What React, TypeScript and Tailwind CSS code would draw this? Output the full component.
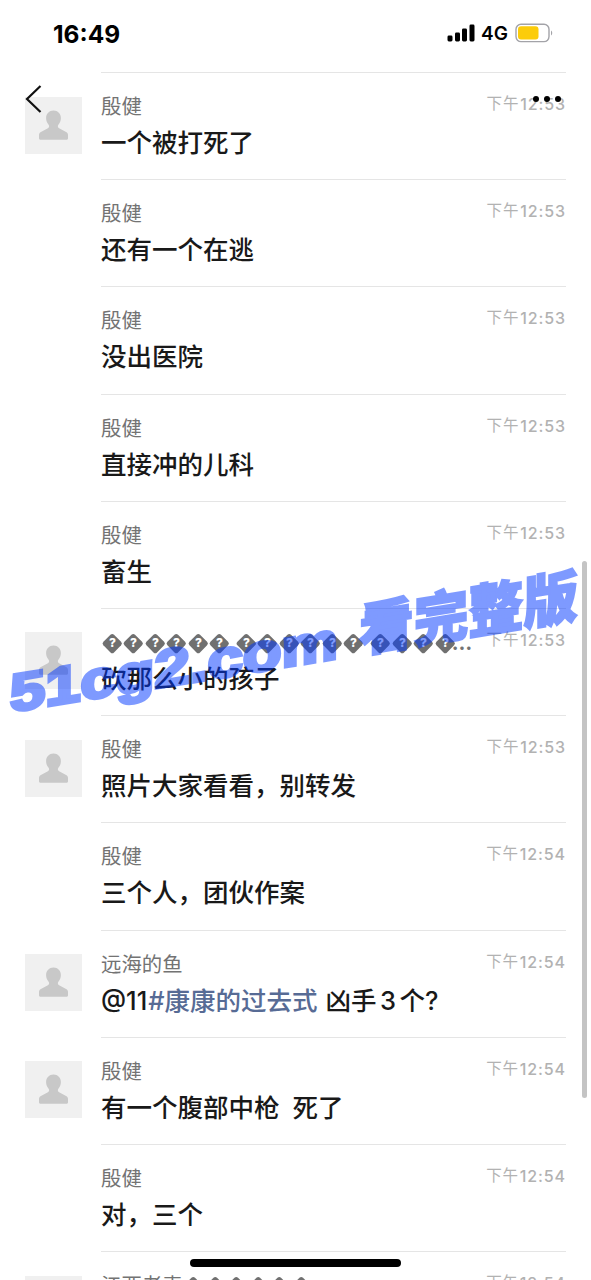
import React from 'react';

interface Message {
  name: string;
  time: string;
  text: React.ReactNode;
  avatar?: boolean;
}

// "?" in a name stands for a character that can't be displayed
const messages: Message[] = [
  { name: '殷健', time: '12:53', text: '一个被打死了', avatar: true },
  { name: '殷健', time: '12:53', text: '还有一个在逃' },
  { name: '殷健', time: '12:53', text: '没出医院' },
  { name: '殷健', time: '12:53', text: '直接冲的儿科' },
  { name: '殷健', time: '12:53', text: '畜生' },
  { name: '?????? ?????? ????…', time: '12:53', text: '砍那么小的孩子', avatar: true },
  { name: '殷健', time: '12:53', text: '照片大家看看，别转发', avatar: true },
  { name: '殷健', time: '12:54', text: '三个人，团伙作案' },
  {
    name: '远海的鱼',
    time: '12:54',
    text: (
      <>
        @11<span className="ml-px text-[#576b95]">#康康的过去式</span>
        <span className="ml-[8px]">凶手</span>
        <span className="mx-[3.5px]">3</span>个?
      </>
    ),
    avatar: true,
  },
  { name: '殷健', time: '12:54', text: <>有一个腹部中枪<span className="ml-[13px]">死了</span></>, avatar: true },
  { name: '殷健', time: '12:54', text: '对，三个' },
  { name: '江西老表??????', time: '12:54', text: '', avatar: true },
];

const StatusBar = () => (
  <div className="flex h-[72px] shrink-0 items-start justify-between pl-[53px] pr-[38px]">
    <span className="mt-[17.5px] font-['Inter'] text-[24.5px] leading-8 font-bold text-black">16:49</span>
    <div className="mt-[17px] flex h-8 items-center">
      <svg className="h-[18px] w-[28px]" viewBox="0 0 28 18">
        <rect x="0.5" y="11.5" width="5" height="6" rx="1.4" />
        <rect x="8" y="8.5" width="5" height="9" rx="1.4" />
        <rect x="15" y="4.5" width="5" height="13" rx="1.4" />
        <rect x="22.5" y="0.5" width="5" height="17" rx="1.4" />
      </svg>
      <span className="mt-[2px] ml-[6px] w-[28px] font-['Inter'] text-[19px] font-semibold text-black">4G</span>
      <svg className="ml-[6px] h-5 w-[38px]" viewBox="0 0 38 20">
        <rect x="1" y="1.2" width="33" height="17.4" rx="5" fill="none" stroke="#a3a3a8" strokeWidth="1.4" />
        <rect x="3" y="3.2" width="20.5" height="13.4" rx="3" fill="#fccc0a" />
        <path d="M36 7.5c1.6.8 1.6 4.2 0 5z" fill="#a3a3a8" />
      </svg>
    </div>
  </div>
);

const Avatar = () => (
  <svg className="h-[57px] w-[57px] bg-[#f0f0f0]" viewBox="0 0 57 57">
    <path
      d="M28.5 13.5c4.3 0 7.4 3.3 7.4 7.6 0 3-1 5-2.5 6.7-.8 1-.8 2.6.7 3.5l7 3.7c1.2.7 1.9 1.7 1.900 3v3.600q0 1.100-1.100 1.100H15.100q-1.100 0-1.100-1.100V38c0-1.300.7-2.300 1.900-3l7-3.700c1.500-.9 1.500-2.500.7-3.500-1.500-1.700-2.500-3.700-2.500-6.700 0-4.300 3.100-7.600 7.400-7.600z"
      fill="#c8c8c8"
    />
  </svg>
);

const UnknownChar = () => (
  <span className="flex w-[21.5px] justify-center">
    <span className="flex h-[14.5px] w-[14.5px] rotate-45 items-center justify-center rounded-[2.5px] bg-[#707070]">
      <span className="-rotate-45 font-['Inter'] text-[12px] leading-none font-extrabold text-white">?</span>
    </span>
  </span>
);

const Name = ({ value }: { value: string }) => (
  <span className="flex h-7 items-center whitespace-pre text-[20.4px] leading-7 text-[#737373]">
    {value.split(/([? …])/).map((part, i) => {
      if (part === '?') return <UnknownChar key={i} />;
      if (part === ' ') return <span key={i} className="w-[5.4px]"> </span>;
      if (part === '…') return <span key={i} className="-ml-1 font-['Inter'] font-bold">…</span>;
      return <span key={i}>{part}</span>;
    })}
  </span>
);

const Row = ({ message }: { message: Message }) => (
  <div className="flex h-[107.2px] shrink-0 pr-[25px] pl-[25px]">
    <div className="w-[76px] shrink-0 pt-[24.5px]">{message.avatar && <Avatar />}</div>
    <div className="flex-1 border-t border-[#e5e5e5] pt-[19px]">
      <div className="flex items-start justify-between">
        <div className="pt-px">
          <Name value={message.name} />
        </div>
        <span className="flex text-[15.5px] leading-6 tracking-[0.8px] whitespace-nowrap text-[#b2b2b2]">
          下午<span className="ml-px font-['Inter'] text-[16px] font-medium tracking-[0.9px]">{message.time}</span>
        </span>
      </div>
      <p className="mt-[4px] text-[25.5px] leading-9 font-medium whitespace-pre text-[#191919]">{message.text}</p>
    </div>
  </div>
);

const Watermark = () => (
  <svg className="pointer-events-none absolute top-0 left-0 h-[1280px] w-[591px]" viewBox="0 0 591 1280">
    <g
      fill="#0037ff"
      stroke="#0037ff"
      opacity="0.5"
      transform="translate(10 712) skewY(-9.3)"
      fontWeight="900"
    >
      <text
        x="0"
        y="0"
        fontSize="53"
        strokeWidth="3.5"
        fontFamily="'Liberation Sans', sans-serif"
        textLength="328"
        lengthAdjust="spacingAndGlyphs"
      >
        51cg2.com
      </text>
      <text
        x="349"
        y="-3"
        fontSize="57"
        strokeWidth="2"
        fontFamily="'Noto Sans CJK SC', sans-serif"
        textLength="219"
        lengthAdjust="spacingAndGlyphs"
      >
        看完整版
      </text>
    </g>
  </svg>
);

export default function App() {
  return (
    <div className="relative flex h-[1280px] w-[591px] flex-col overflow-hidden bg-white font-['Inter','Noto_Sans_CJK_SC',sans-serif]">
      <StatusBar />
      {messages.map((message, i) => (
        <Row key={i} message={message} />
      ))}

      {/* Floating navigation */}
      <svg className="absolute top-[84px] left-[24px] h-[30px] w-[20px]" viewBox="0 0 20 30">
        <path d="M16.5 2 3 15l13.5 13" fill="none" stroke="#111" strokeWidth="2.2" />
      </svg>
      <svg className="absolute top-[95px] left-[532px] h-2 w-[30px]" viewBox="0 0 30 8">
        <circle cx="4" cy="4" r="3" />
        <circle cx="15" cy="4" r="3" />
        <circle cx="26" cy="4" r="3" />
      </svg>

      <div className="absolute top-[561px] left-[582px] h-[537px] w-[4.5px] rounded-full bg-[#c4c4c4]" />
      <div className="absolute top-[1259px] left-[190px] h-[8px] w-[211px] rounded-full bg-black" />
      <Watermark />
    </div>
  );
}
